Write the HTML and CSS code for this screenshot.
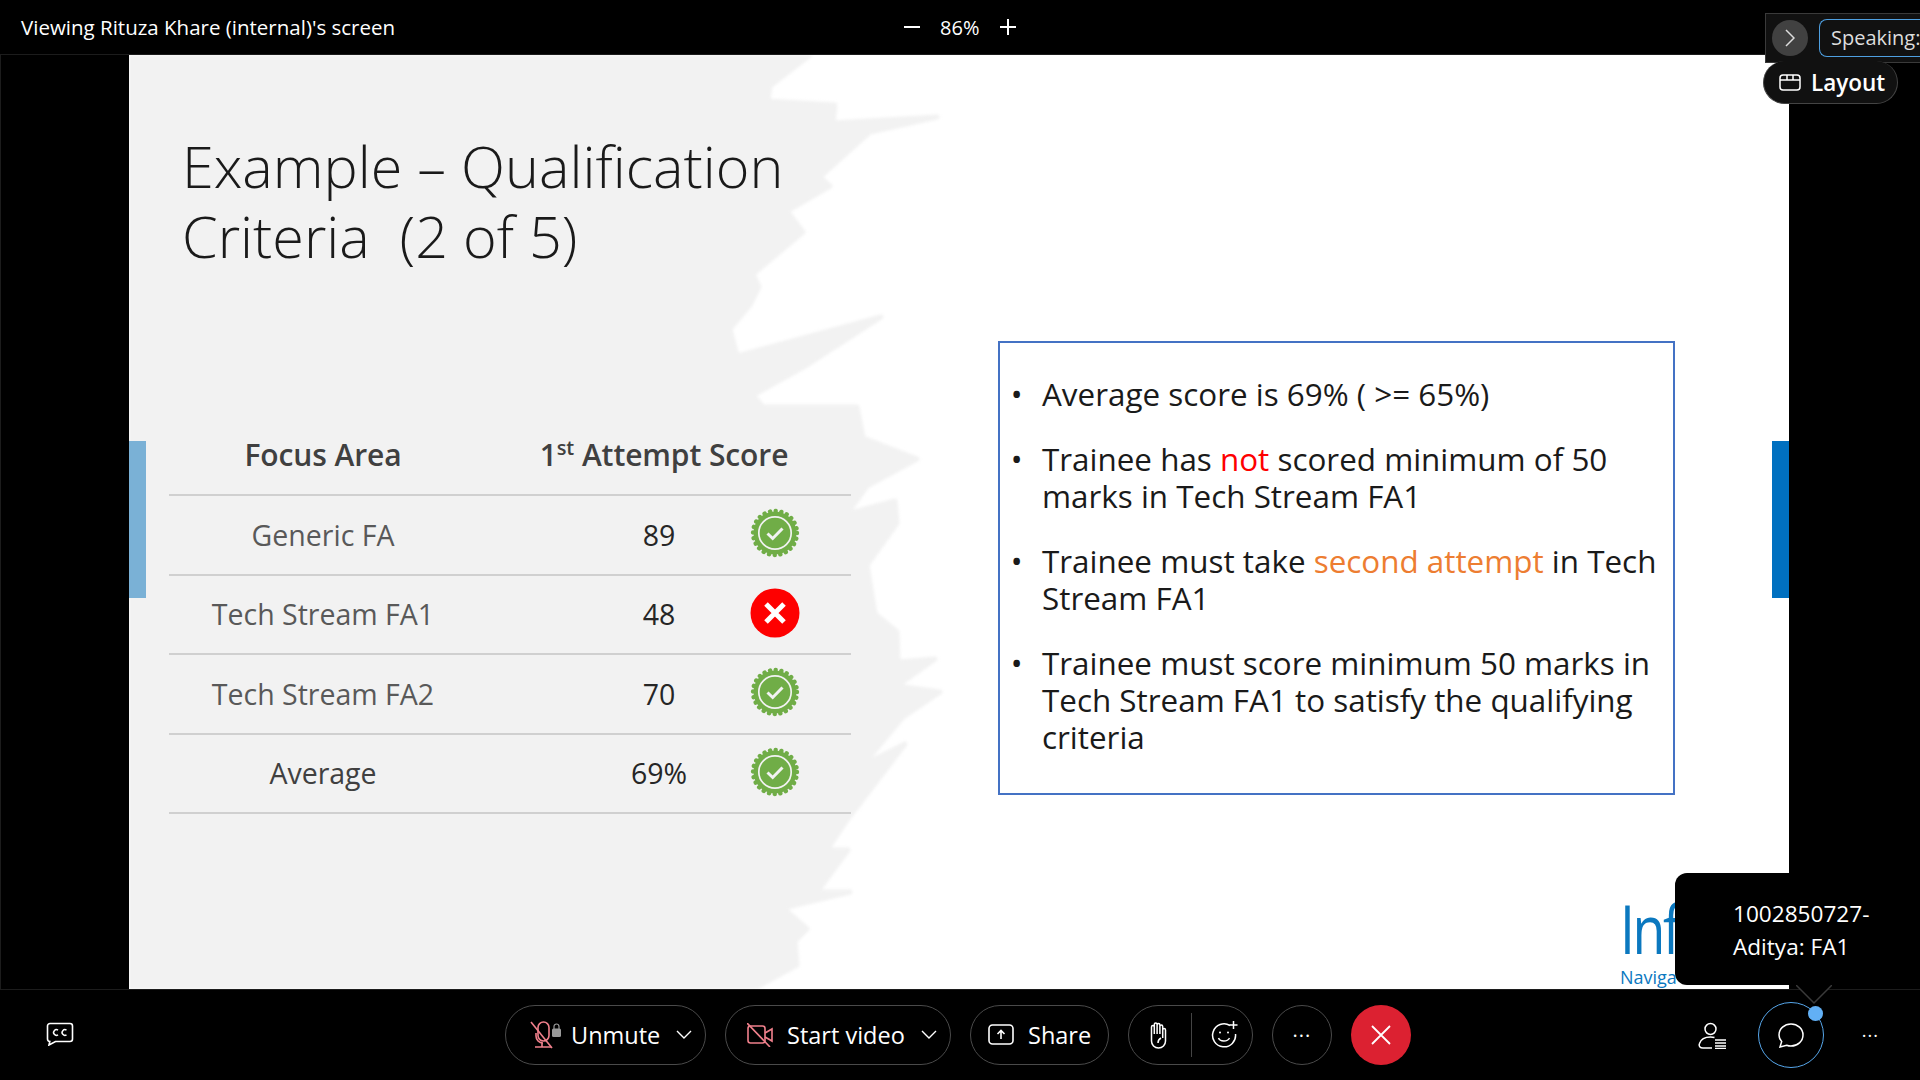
FILE: index.html
```html
<!DOCTYPE html>
<html lang="en">
  <head>
    <meta charset="UTF-8" />
    <title>Meeting</title>
    <link rel="stylesheet" href="styles.css">
  </head>
  <body>
    <svg class="defs" width="0" height="0">
      <symbol id="badge" viewBox="0 0 50 50">
        <circle cx="25" cy="25" r="21.5" fill="#70ad47" />
        <circle cx="25" cy="25" r="22" fill="none" stroke="#70ad47" stroke-width="4.4" stroke-linecap="round" stroke-dasharray="0.1 5.66" />
        <circle cx="25" cy="25" r="16.2" fill="none" stroke="#f2f2f2" stroke-width="1.7" />
        <path d="M17.5 25.5l5.2 5 9.8-10" fill="none" stroke="#f2f2f2" stroke-width="3" />
      </symbol>
      <symbol id="cross" viewBox="0 0 50 50">
        <circle cx="25" cy="25" r="24.5" fill="#fe0000" />
        <path d="M16 16l18 18M34 16l-18 18" stroke="#fff" stroke-width="5" />
      </symbol>
      <symbol id="chevron" viewBox="0 0 16 10">
        <path d="M1 1l7 7 7-7" fill="none" stroke="#fff" stroke-width="1.4" />
      </symbol>
    </svg>

    <div class="app">
      <header class="topbar">
        <span class="viewing">Viewing Rituza Khare (internal)'s screen</span>
        <div class="zoom">
          <svg width="16" height="2" viewBox="0 0 16 2"><path d="M0 1h16" stroke="#fff" stroke-width="2" /></svg>
          <span>86%</span>
          <svg width="16" height="16" viewBox="0 0 16 16"><path d="M0 8h16M8 0v16" stroke="#fff" stroke-width="2" /></svg>
        </div>
      </header>

      <main class="stage">
        <section class="slide">
          <svg class="brush" viewBox="0 0 1660 934">
            <path fill="#f2f2f2" d="M0 0H681L641 31 639 46 706 50 704 68 808 62 741 77 691 122 701 131 658 156 674 177 624 219 630 232 621 250 601 274 608 301 752 262 678 310 624 340 634 352 728 352 734 383 788 404 738 431 718 459 766 446 768 468 738 510 746 559 768 577 769 607 806 604 768 631 811 637 774 662 734 710 776 689 718 765 698 795 719 795 688 837 721 837 654 853 678 874 666 886 668 910 624 934H0Z" />
          </svg>
          <h1 class="slide-title">Example – Qualification<br>Criteria&nbsp; (2 of 5)</h1>
          <div class="slide-body">
            <div class="scores">
              <div class="scores-head">
                <span>Focus Area</span>
                <span>1<sup>st</sup> Attempt Score</span>
              </div>
              <div class="score-row">
                <span class="area">Generic FA</span>
                <span class="value">89</span>
                <svg class="mark"><use href="#badge" /></svg>
              </div>
              <div class="score-row">
                <span class="area">Tech Stream FA1</span>
                <span class="value">48</span>
                <svg class="mark"><use href="#cross" /></svg>
              </div>
              <div class="score-row">
                <span class="area">Tech Stream FA2</span>
                <span class="value">70</span>
                <svg class="mark"><use href="#badge" /></svg>
              </div>
              <div class="score-row total">
                <span class="area">Average</span>
                <span class="value">69%</span>
                <svg class="mark"><use href="#badge" /></svg>
              </div>
            </div>
            <ul class="notes">
              <li>Average score is 69% ( &gt;= 65%)</li>
              <li>Trainee has <span class="red">not</span> scored minimum of 50 marks in Tech Stream FA1</li>
              <li>Trainee must take <span class="orange">second attempt</span> in Tech Stream FA1</li>
              <li>Trainee must score minimum 50 marks in Tech Stream FA1 to satisfy the qualifying criteria</li>
            </ul>
          </div>
          <div class="side-bar left"></div>
          <div class="side-bar right"></div>
          <div class="logo">
            <div class="logo-name">Inf</div>
            <div class="logo-tag">Naviga</div>
          </div>
        </section>
      </main>

      <footer class="toolbar">
        <div class="tool-left">
          <svg width="28" height="24" viewBox="0 0 28 24" fill="none" stroke="#fff" stroke-width="1.6">
            <path d="M4 1.5h20a2.5 2.5 0 0 1 2.5 2.5v13a2.5 2.5 0 0 1-2.5 2.5H9.500L3 23l.8-3.500A2.500 2.500 0 0 1 1.500 17V4A2.500 2.500 0 0 1 4 1.500z" />
            <path d="M12 8.200a2.800 2.800 0 1 0 0 4.600M20.500 8.200a2.800 2.800 0 1 0 0 4.600" stroke-width="1.500" />
          </svg>
        </div>

        <div class="tool-main">
          <button class="pill unmute">
            <svg class="mic" width="28" height="28" viewBox="0 0 28 28" fill="none" stroke="#f0808c" stroke-width="1.600">
              <path d="M1 1l21 26" />
              <rect x="8" y="1" width="11" height="19" rx="5.500" />
              <path d="M6 12v3a7 7 0 0 0 7 7M12 22v4M5 26h16" />
            </svg>
            <svg class="lock" width="9" height="14" viewBox="0 0 9 14" fill="#9a9a9a">
              <path d="M2 6V3.500a2.500 2.500 0 0 1 5 0V6" fill="none" stroke="#9a9a9a" stroke-width="1.200" />
              <rect y="5.500" width="9" height="8.500" rx="1.500" />
            </svg>
            <span>Unmute</span>
            <svg class="chev"><use href="#chevron" /></svg>
          </button>

          <button class="pill video">
            <svg width="26" height="24" viewBox="0 0 26 24" fill="none" stroke="#f0808c" stroke-width="1.600">
              <rect x="1" y="3" width="17" height="17" rx="2.500" />
              <path d="M18 10l7-4v12l-7-4M0 0l23 24" />
            </svg>
            <span>Start video</span>
            <svg class="chev"><use href="#chevron" /></svg>
          </button>

          <button class="pill share">
            <svg width="26" height="24" viewBox="0 0 26 24" fill="none" stroke="#fff" stroke-width="1.600">
              <rect x="1" y="2" width="24" height="19" rx="3.500" />
              <path d="M13 16V7.500M9.500 11L13 7.500l3.500 3.500" />
            </svg>
            <span>Share</span>
          </button>

          <div class="pill reactions">
            <svg width="20" height="27" viewBox="0 0 20 27" fill="none" stroke="#fff" stroke-width="1.500">
              <path d="M3.500 15V5a1.400 1.400 0 0 1 2.800 0M6.300 12V2.500a1.400 1.400 0 0 1 2.800 0V12M9.100 3a1.400 1.400 0 0 1 2.800 0v9M11.900 4.500a1.400 1.400 0 0 1 2.800 0V16M14.700 8a1.400 1.400 0 0 1 2.800 0v11c0 4-3 7-7 7s-7-3-7-7v-4" />
              <path d="M13 16c-2 1-3 3-3 5" />
            </svg>
            <i class="divider"></i>
            <svg width="27" height="28" viewBox="0 0 27 28" fill="none" stroke="#fff" stroke-width="1.500">
              <path d="M19 4.500A11.500 11.500 0 1 0 24.500 13" />
              <path d="M22.500 0v8M18.500 4h8M7.500 17c1.500 4 9 4 11 0" />
              <circle cx="9" cy="11.500" r="1" fill="#fff" stroke="none" />
              <circle cx="17" cy="11.500" r="1" fill="#fff" stroke="none" />
            </svg>
          </div>

          <button class="pill round more">···</button>
          <button class="pill round leave">
            <svg width="20" height="20" viewBox="0 0 20 20"><path d="M1 1l18 18M19 1L1 19" stroke="#fff" stroke-width="1.800" /></svg>
          </button>
        </div>

        <div class="tool-right">
          <svg width="28" height="27" viewBox="0 0 28 27" fill="none" stroke="#fff" stroke-width="1.500">
            <circle cx="12.500" cy="7" r="5.500" />
            <path d="M14 26H5c-3 0-4.500-2-3.500-4.500C3 17 7 15 12.500 15c1.500 0 3 .2 4 .5" />
            <path d="M17 18h11M17 21h11M17 24h11M17 26.500h11" />
          </svg>
          <div class="chat">
            <svg width="26" height="25" viewBox="0 0 26 25" fill="none" stroke="#fff" stroke-width="1.500">
              <path d="M13 1c6.600 0 12 4.800 12 11s-5.400 11-12 11c-1.600 0-3-.3-4.300-.8L2 24l1.700-5.600C2 16.600 1 14.400 1 12 1 5.800 6.400 1 13 1z" />
            </svg>
            <i class="chat-dot"></i>
          </div>
          <span class="tool-dots">···</span>
        </div>
      </footer>
    </div>

    <!-- stuff floating over the slide -->
    <div class="speaking">
      <button class="collapse">
        <svg width="10" height="18" viewBox="0 0 10 18"><path d="M1 1l8 8-8 8" fill="none" stroke="#ddd" stroke-width="1.500" /></svg>
      </button>
      <div class="speaking-name">Speaking:</div>
    </div>
    <button class="layout">
      <svg width="22" height="17" viewBox="0 0 22 17" fill="none" stroke="#fff" stroke-width="1.500">
        <rect x="1" y="1" width="20" height="15" rx="3" />
        <path d="M1 6h20M8 1v5M14 1v5" />
      </svg>
      Layout
    </button>
    <div class="toast">1002850727-<br>Aditya: FA1</div>
    <svg class="toast-tail" width="36" height="20" viewBox="0 0 36 20">
      <path d="M0 0l18 18L36 0z" fill="#000" />
      <path d="M0 0l18 18L36 0" fill="none" stroke="#3a3a3a" stroke-width="1.500" />
    </svg>
  </body>
</html>
```
FILE: styles.css
```css
* {
  box-sizing: border-box;
}
html,
body {
  margin: 0;
  height: 100%;
  background: #000;
  overflow: hidden;
}
body {
  font-family: "Open Sans", "Liberation Sans", sans-serif;
  color: #fff;
}
button {
  font: inherit;
  color: inherit;
  background: none;
}
.defs {
  position: absolute;
}
.app {
  width: 1920px;
  height: 1080px;
  display: flex;
  flex-direction: column;
}

/* top bar */
.topbar {
  height: 55px;
  flex: none;
  display: flex;
  align-items: center;
  position: relative;
  padding-left: 21px;
  border-bottom: 1px solid #1c1c1c;
}
.viewing {
  font-size: 20.500px;
}
.zoom {
  display: flex;
  align-items: center;
  margin-left: 509px;
  gap: 20px;
  font-size: 20px;
  font-weight: 500;
}

/* shared slide */
.stage {
  flex: 1;
  padding: 0 131px 0 128px;
  border-left: 1px solid #1c1c1c;
  min-height: 0;
}
.slide {
  height: 100%;
  position: relative;
  background: #fff;
  color: #262626;
  padding: 77px 0 0 40px;
  overflow: hidden;
}
.brush {
  position: absolute;
  left: 0;
  top: 0;
  width: 1660px;
  height: 934px;
  filter: blur(1.500px);
}
.brush path {
  stroke: #f2f2f2;
  stroke-width: 5;
  stroke-linejoin: round;
}
.slide-title {
  position: relative;
  margin: 0 0 0 13px;
  font-size: 57.500px;
  line-height: 69.500px;
  font-weight: 300;
  color: #1a1a1a;
}
.slide-body {
  position: relative;
  display: flex;
  align-items: flex-start;
  gap: 147px;
  margin-top: 70px;
}

.scores {
  width: 682px;
  margin-top: 75px;
}
.scores-head {
  display: grid;
  grid-template-columns: 308px 374px;
  height: 80px;
  align-items: center;
  text-align: center;
  font-size: 30px;
  font-weight: 600;
  color: #404040;
  border-bottom: 2px solid #d0d0d0;
  letter-spacing: -0.100px;
  padding-bottom: 2px;
}
.scores-head sup {
  font-size: 20px;
  line-height: 0;
}
.score-row {
  display: grid;
  grid-template-columns: 308px 272px 52px;
  height: 79.500px;
  align-items: center;
  text-align: center;
  font-size: 28.500px;
  border-bottom: 2px solid #d0d0d0;
}
.area {
  color: #595959;
}
.value {
  padding-left: 92px;
  color: #262626;
}
.total .area {
  color: #404040;
  font-weight: 500;
}
.total .value {
  font-weight: 500;
}
.mark {
  width: 50px;
  height: 50px;
  margin: -3px 0 0 1px;
}

.notes {
  width: 677px;
  height: 454px;
  margin: 0;
  padding: 32px 10px 0 42px;
  border: 2px solid #4472c4;
  background: #fff;
  list-style-type: "•  \200A";
  font-size: 31.400px;
  line-height: 37px;
  color: #1a1a1a;
}
.notes li {
  margin-bottom: 28px;
}
.red {
  color: #fe0000;
}
.orange {
  color: #ed7d31;
}
.side-bar {
  position: absolute;
  top: 386px;
  width: 17px;
  height: 157px;
}
.side-bar.left {
  left: 0;
  background: #7ab1d6;
}
.side-bar.right {
  right: 0;
  background: #0070c0;
}
.logo {
  position: absolute;
  left: 1491px;
  top: 840px;
  color: #0b78bf;
  white-space: nowrap;
}
.logo-name {
  font-size: 67px;
  line-height: 66px;
  letter-spacing: -3px;
  transform: scaleX(0.8);
  transform-origin: left center;
}
.logo-tag {
  font-size: 18px;
  line-height: 22px;
  margin-top: 5px;
}

/* bottom toolbar */
.toolbar {
  height: 91px;
  flex: none;
  display: grid;
  grid-template-columns: 505px auto 1fr;
  align-items: center;
  border-top: 1px solid #1c1c1c;
}
.tool-left {
  padding: 0 0 3px 46px;
  display: flex;
}
.tool-main {
  display: flex;
  align-items: center;
  gap: 19px;
}
.pill {
  height: 60px;
  border: 1.500px solid #4a4a4a;
  border-radius: 30px;
  display: flex;
  align-items: center;
  font-size: 23.500px;
  font-weight: 500;
  padding: 0;
}
.unmute {
  width: 201px;
  padding-left: 24px;
}
.unmute .lock {
  margin: -10px 0 0 -6px;
}
.unmute span {
  margin-left: 10px;
}
.chev {
  width: 16px;
  height: 10px;
  margin-left: auto;
  margin-right: 13px;
}
.video {
  width: 226px;
  padding-left: 21px;
}
.video span {
  margin-left: 14px;
}
.share {
  width: 139px;
  padding-left: 17px;
  gap: 14px;
}
.reactions {
  width: 125px;
  padding-left: 19px;
}
.divider {
  width: 1px;
  height: 44px;
  background: #444;
  margin: 0 19px 0 23px;
}
.round {
  width: 60px;
  justify-content: center;
}
.more {
  font-size: 20px;
  letter-spacing: 1px;
}
.leave {
  background: #dc2131;
  border: none;
}
.tool-right {
  display: flex;
  align-items: center;
  justify-content: flex-end;
  padding-right: 41px;
  gap: 32px;
}
.chat {
  width: 66px;
  height: 66px;
  border: 1.500px solid #56a6ea;
  border-radius: 50%;
  display: flex;
  align-items: center;
  justify-content: center;
  position: relative;
  margin-right: 6px;
}
.chat-dot {
  position: absolute;
  left: 49px;
  top: 3px;
  width: 15px;
  height: 15px;
  border-radius: 50%;
  background: #62b0f5;
}
.tool-dots {
  font-size: 18px;
  letter-spacing: 1px;
}

/* overlays */
.speaking {
  position: absolute;
  left: 1765px;
  top: 13px;
  width: 155px;
  height: 50px;
  display: flex;
  align-items: center;
  background: #111;
  border: 1px solid #3a3a3a;
  border-right: none;
  padding-left: 6px;
  overflow: hidden;
}
.collapse {
  width: 36px;
  height: 36px;
  flex: none;
  border: none;
  border-radius: 50%;
  background: #414141;
  padding: 0;
  display: flex;
  align-items: center;
  justify-content: center;
}
.speaking-name {
  flex: none;
  margin-left: 11px;
  width: 120px;
  height: 38px;
  border: 1.500px solid #4e9fe0;
  border-radius: 8px 0 0 8px;
  border-right: none;
  padding-left: 11px;
  font-size: 20px;
  line-height: 35px;
  color: #ddd;
  white-space: nowrap;
}
.layout {
  position: absolute;
  left: 1763px;
  top: 61px;
  width: 135px;
  height: 43px;
  border: 1.500px solid #444;
  border-top: none;
  background: #111;
  color: #fff;
  display: flex;
  align-items: center;
  gap: 10px;
  padding: 0 0 0 15px;
  font-size: 22.500px;
  font-weight: 600;
  border-radius: 22px;
}
.toast {
  position: absolute;
  left: 1675px;
  top: 873px;
  width: 245px;
  height: 112px;
  background: #000;
  border-radius: 12px 0 0 12px;
  padding: 25px 0 0 58px;
  font-size: 22.600px;
  line-height: 32.500px;
}
.toast-tail {
  position: absolute;
  left: 1796px;
  top: 985px;
}
```
